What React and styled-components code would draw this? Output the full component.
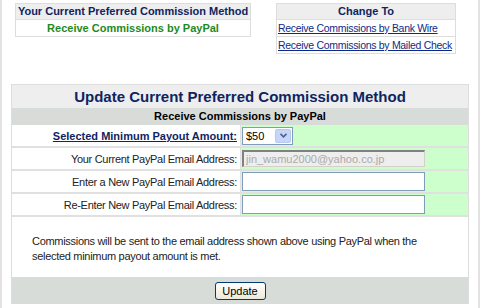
import React from 'react'
import styled, { createGlobalStyle } from 'styled-components'

const GlobalStyle = createGlobalStyle`
  html, body {
    margin: 0;
    padding: 0;
    background: #ffffff;
  }
  body {
    font-family: "Liberation Sans", Arial, sans-serif;
    font-size: 11px;
    letter-spacing: -0.3px;
    color: #000000;
  }
`

const Page = styled.div`
  box-sizing: border-box;
  width: 480px;
  height: 308px;
  overflow: hidden;
  border-left: 2px solid #e2e2e2;
  border-right: 2px solid #e2e2e2;
  padding: 3px 9px 0 9px;
`

const TopRow = styled.div`
  display: flex;
  justify-content: space-between;
  align-items: flex-start;
  padding: 0 13px 0 4px;
`

const InfoBox = styled.div`
  display: flex;
  flex-direction: column;
  width: ${p => p.$width}px;
  border: 1px solid #dddddd;
  background: #dddddd;
  gap: 1px;
`

const InfoHead = styled.div`
  background: #eeeeee;
  color: #0f2460;
  font-weight: bold;
  letter-spacing: 0;
  text-align: center;
  height: 15px;
  line-height: 15px;
`

const InfoCell = styled.div`
  background: #ffffff;
  height: 16px;
  line-height: 16px;
  white-space: nowrap;
  overflow: hidden;
  text-align: ${p => (p.$left ? 'left' : 'center')};
  color: ${p => (p.$green ? '#1e8a1e' : '#0f2460')};
  font-weight: ${p => (p.$green ? 'bold' : 'normal')};
  font-size: ${p => (p.$green ? '11px' : '10.5px')};
  letter-spacing: ${p => (p.$green ? '0' : '-0.3px')};
  padding: 0 1px;
`

const Link = styled.a`
  color: #0f2a86;
  text-decoration: underline;
  cursor: pointer;
`

const Panel = styled.div`
  margin-top: 30px;
  border: 1px solid #dddddd;
  border-bottom: none;
  display: flex;
  flex-direction: column;
`

const Title = styled.div`
  background: #eeeeee;
  color: #0f2460;
  font-size: 15px;
  font-weight: bold;
  letter-spacing: 0;
  text-align: center;
  height: 23px;
  line-height: 24px;
`

const SubHead = styled.div`
  background: #d8dcd8;
  font-weight: bold;
  letter-spacing: 0;
  text-align: center;
  height: 17px;
  line-height: 17px;
`

const Form = styled.div`
  display: grid;
  grid-template-columns: 228px 1fr;
  column-gap: 1px;
  row-gap: 2px;
  background: #e0e0e0;
  padding-bottom: 2px;
`

const Label = styled.div`
  background: #ffffff;
  padding-right: 3px;
  height: 21px;
  display: flex;
  align-items: center;
  justify-content: flex-end;
  white-space: nowrap;
  color: #222222;
`

const LabelLink = styled(Link)`
  font-weight: bold;
  letter-spacing: 0;
  color: #0f2460;
`

const Value = styled.div`
  background: #ccffcc;
  display: flex;
  align-items: center;
  padding-left: 1px;
`

const SelectBox = styled.div`
  display: flex;
  align-items: stretch;
  width: 49px;
  height: 16px;
  border: 1px solid #7f9db9;
  background: #ffffff;
`

const Select = styled.select`
  appearance: none;
  border: none;
  outline: none;
  background: transparent;
  font: inherit;
  padding: 0 0 0 3px;
  flex: 1;
  min-width: 0;
  color: #000000;
`

const ArrowBtn = styled.span`
  width: 14px;
  margin: 1px;
  border: 1px solid #b8c9f0;
  border-radius: 2px;
  background: #c5d5fb;
  display: flex;
  align-items: center;
  justify-content: center;
`

const TextInput = styled.input`
  box-sizing: border-box;
  width: 183px;
  height: ${p => (p.disabled ? 17 : 19)}px;
  font: inherit;
  padding: 0 2px;
  border: 1px solid #7f9db9;
  background: #ffffff;
  outline: none;

  &:disabled {
    background: #eeeeee;
    color: #aaaaaa;
    border-color: #808080 #d4d0c8 #d4d0c8 #808080;
    border-width: 2px 1px 1px 2px;
  }
`

const Note = styled.div`
  background: #ffffff;
  padding: 17px 20px 13px 20px;
  line-height: 15px;
  color: #222222;
`

const Footer = styled.div`
  background: #d8dcd8;
  height: 27px;
  display: flex;
  justify-content: center;
  align-items: center;
`

const Button = styled.button`
  font: inherit;
  color: #000000;
  height: 18px;
  width: 51px;
  padding: 0;
  border: 1px solid #003c74;
  border-radius: 3px;
  background: linear-gradient(#ffffff, #ece9d8);
  cursor: pointer;
`

const Chevron = () => (
  <svg width="7" height="5" viewBox="0 0 7 5">
    <path d="M0.5 0.8 L3.5 3.8 L6.5 0.8" fill="none" stroke="#4d6185" strokeWidth="1.6" />
  </svg>
)

export default function App () {
  return (
    <Page>
      <GlobalStyle />
      <TopRow>
        <InfoBox $width={234}>
          <InfoHead>Your Current Preferred Commission Method</InfoHead>
          <InfoCell $green>Receive Commissions by PayPal</InfoCell>
        </InfoBox>
        <InfoBox $width={178}>
          <InfoHead>Change To</InfoHead>
          <InfoCell $left><Link>Receive Commissions by Bank Wire</Link></InfoCell>
          <InfoCell $left><Link>Receive Commissions by Mailed Check</Link></InfoCell>
        </InfoBox>
      </TopRow>

      <Panel>
        <Title>Update Current Preferred Commission Method</Title>
        <SubHead>Receive Commissions by PayPal</SubHead>
        <Form>
          <Label><LabelLink>Selected Minimum Payout Amount:</LabelLink></Label>
          <Value>
            <SelectBox>
              <Select defaultValue="50">
                <option value="50">$50</option>
                <option value="100">$100</option>
              </Select>
              <ArrowBtn><Chevron /></ArrowBtn>
            </SelectBox>
          </Value>

          <Label>Your Current PayPal Email Address:</Label>
          <Value>
            <TextInput disabled defaultValue="jin_wamu2000@yahoo.co.jp" />
          </Value>

          <Label>Enter a New PayPal Email Address:</Label>
          <Value><TextInput /></Value>

          <Label>Re-Enter New PayPal Email Address:</Label>
          <Value><TextInput /></Value>
        </Form>
        <Note>
          Commissions will be sent to the email address shown above using PayPal when the
          selected minimum payout amount is met.
        </Note>
        <Footer>
          <Button>Update</Button>
        </Footer>
      </Panel>
    </Page>
  )
}
